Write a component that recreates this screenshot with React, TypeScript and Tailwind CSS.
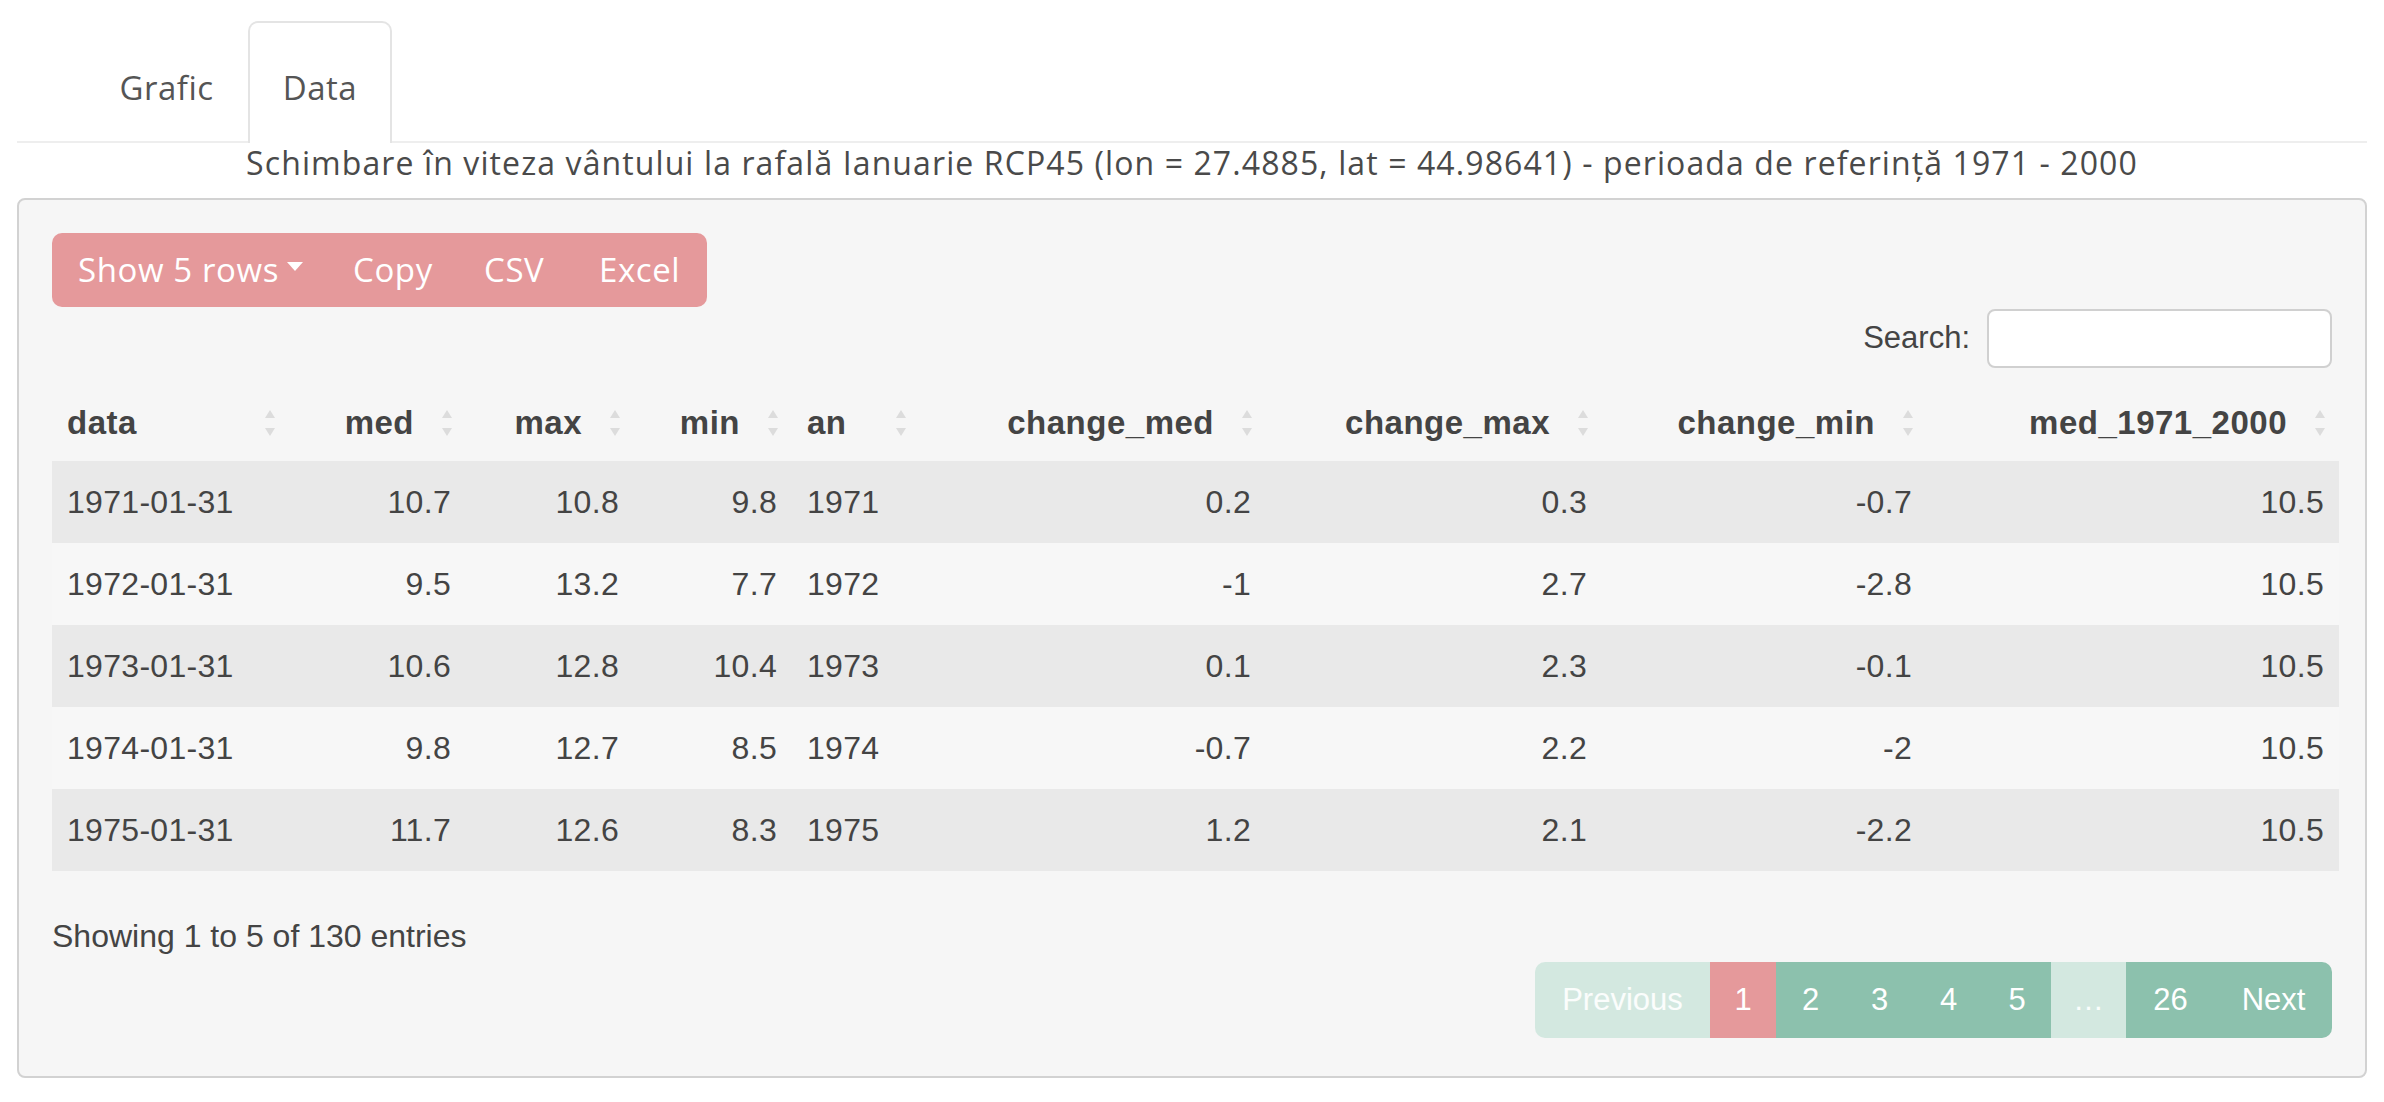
import React from 'react'

const rows = [
  ['1971-01-31', '10.7', '10.8', '9.8', '1971', '0.2', '0.3', '-0.7', '10.5'],
  ['1972-01-31', '9.5', '13.2', '7.7', '1972', '-1', '2.7', '-2.8', '10.5'],
  ['1973-01-31', '10.6', '12.8', '10.4', '1973', '0.1', '2.3', '-0.1', '10.5'],
  ['1974-01-31', '9.8', '12.7', '8.5', '1974', '-0.7', '2.2', '-2', '10.5'],
  ['1975-01-31', '11.7', '12.6', '8.3', '1975', '1.2', '2.1', '-2.2', '10.5'],
]

// column name, width, numeric (right aligned)
const columns: [string, number, boolean][] = [
  ['data', 237, false],
  ['med', 177, true],
  ['max', 168, true],
  ['min', 158, true],
  ['an', 128, false],
  ['change_med', 346, true],
  ['change_max', 336, true],
  ['change_min', 325, true],
  ['med_1971_2000', 412, true],
]

const SortIcon = () => (
  <svg width="12" height="30" viewBox="0 0 12 30" className="absolute right-[13px] top-1/2 -translate-y-1/2">
    <path d="M6 2 L11 10 L1 10 Z" fill="#dcdcdc" />
    <path d="M6 28 L11 20 L1 20 Z" fill="#dcdcdc" />
  </svg>
)

const sans = "font-['Liberation_Sans',Arial,sans-serif]"
const display = "font-['Open_Sans','Noto_Sans',sans-serif]"

export default function App() {
  return (
    <div className="min-h-screen w-full bg-white px-[17px] text-[#444]">
      {/* tabs */}
      <div className={`flex border-b-2 border-[#eeeeee] pl-[70px] pt-[21px] ${display}`}>
        <div className="flex h-[120px] w-[159px] items-start justify-center pt-[45px] text-[33px] leading-[44px] tracking-[0.5px] text-[#555]">
          Grafic
        </div>
        <div className="-mb-[2px] ml-[2px] flex h-[122px] w-[144px] items-start justify-center rounded-t-[10px] border-2 border-b-0 border-[#e4e4e4] bg-white pt-[43px] text-[33px] leading-[44px] tracking-[0.5px] text-[#555]">
          Data
        </div>
      </div>

      {/* title */}
      <div className={`h-[40px] text-center text-[32px] leading-[40px] tracking-[1.1px] text-[#4a4a4a] ${display}`}>
        Schimbare în viteza vântului la rafală Ianuarie RCP45 (lon = 27.4885, lat = 44.98641) - perioada de referință 1971 - 2000
      </div>

      {/* well */}
      <div className="mt-[15px] h-[880px] rounded-[8px] border-2 border-[#d2d2d2] bg-[#f6f6f6] pl-[33px] pr-[33px] pt-[33px]">
        {/* buttons */}
        <div className={`flex h-[74px] w-[655px] items-center rounded-[10px] bg-[#e5999b] text-[33px] tracking-[0.6px] text-white ${display}`}>
          <div className="flex w-[276px] items-center pl-[26px]">
            <span>Show 5 rows</span>
            <svg width="16" height="10" viewBox="0 0 16 10" className="ml-[8px] -mt-[6px]">
              <path d="M0 0 L16 0 L8 9 Z" fill="white" />
            </svg>
          </div>
          <div className="w-[131px] pl-[25px]">Copy</div>
          <div className="w-[116px] pl-[25px]">CSV</div>
          <div className="w-[132px] pl-[24px]">Excel</div>
        </div>

        {/* search */}
        <div className={`mt-[2px] flex items-center justify-end gap-[17px] text-[31px] text-[#444] ${sans}`}>
          <span>Search:</span>
          <div className="h-[59px] w-[345px] rounded-[8px] border-2 border-[#d0d0d0] bg-white" />
        </div>

        {/* table */}
        <table className={`mt-[16px] w-[2287px] table-fixed border-collapse text-[32px] tracking-[0.3px] ${sans}`}>
          <colgroup>
            {columns.map(([name, w]) => (
              <col key={name} style={{ width: w }} />
            ))}
          </colgroup>
          <thead>
            <tr className="h-[77px]">
              {columns.map(([name, , num]) => (
                <th
                  key={name}
                  className={`relative text-[33px] font-bold tracking-[0.5px] text-[#444] ${num ? 'pr-[52px] text-right' : 'pl-[15px] text-left'}`}
                >
                  {name}
                  <SortIcon />
                </th>
              ))}
            </tr>
          </thead>
          <tbody>
            {rows.map((r, i) => (
              <tr key={r[0]} className={`h-[82px] ${i % 2 === 0 ? 'bg-[#e9e9e9]' : 'bg-[#f7f7f7]'}`}>
                {r.map((v, j) => (
                  <td
                    key={j}
                    className={`px-[15px] text-[#444] ${columns[j][2] ? 'text-right' : 'text-left'}`}
                  >
                    {v}
                  </td>
                ))}
              </tr>
            ))}
          </tbody>
        </table>

        {/* footer */}
        <div className={`flex items-start justify-between text-[31px] ${sans}`}>
          <div className="pt-[43px] text-[32px] leading-[44px] text-[#444]">Showing 1 to 5 of 130 entries</div>
          <div className="pt-[91px]">
            <div className="flex h-[76px] overflow-hidden rounded-[10px] text-white">
              <div className="flex w-[175px] items-center justify-center bg-[#d3e8e0] text-white/90">Previous</div>
              <div className="flex w-[66px] items-center justify-center bg-[#e5999b]">1</div>
              <div className="flex w-[69px] items-center justify-center bg-[#8cc1ad]">2</div>
              <div className="flex w-[69px] items-center justify-center bg-[#8cc1ad]">3</div>
              <div className="flex w-[69px] items-center justify-center bg-[#8cc1ad]">4</div>
              <div className="flex w-[68px] items-center justify-center bg-[#8cc1ad]">5</div>
              <div className="flex w-[75px] items-center justify-center bg-[#d3e8e0] text-white/90">…</div>
              <div className="flex w-[89px] items-center justify-center bg-[#8cc1ad]">26</div>
              <div className="flex w-[117px] items-center justify-center bg-[#8cc1ad]">Next</div>
            </div>
          </div>
        </div>
      </div>
    </div>
  )
}
